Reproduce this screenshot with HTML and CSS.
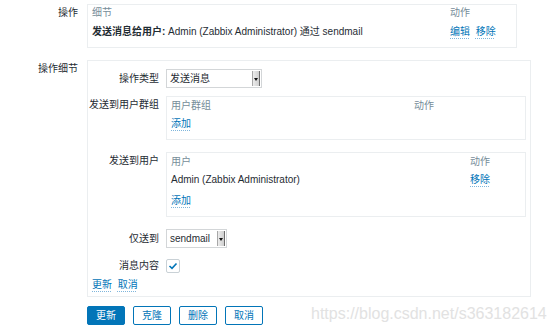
FILE: index.html
```html
<!DOCTYPE html>
<html lang="zh-CN">
<head>
  <meta charset="UTF-8" />
  <meta name="viewport" content="width=device-width, initial-scale=1.0"/>
  <title>操作</title>
  <link rel="stylesheet" href="styles.css">
</head>
<body>
  <div class="page">
    <div class="row">
      <div class="label">操作</div>
      <div class="box ops">
        <div class="ops-head">
          <span class="col-detail">细节</span>
          <span>动作</span>
        </div>
        <div class="ops-line">
          <span class="col-detail"><b>发送消息给用户:</b> Admin (Zabbix Administrator) 通过 sendmail</span>
          <span class="links"><a href="#">编辑</a> <a href="#">移除</a></span>
        </div>
      </div>
    </div>

    <div class="row row-details">
      <div class="label">操作细节</div>
      <div class="box details">
        <div class="field field-type">
          <div class="field-label">操作类型</div>
          <div class="select select-type">
            <span class="select-text">发送消息</span>
            <span class="select-arrow"></span>
          </div>
        </div>

        <div class="field field-top field-groups">
          <div class="field-label">发送到用户群组</div>
          <div class="inner">
            <div class="inner-head">
              <span class="col-group">用户群组</span>
              <span>动作</span>
            </div>
            <div class="inner-line"><a href="#">添加</a></div>
          </div>
        </div>

        <div class="field field-top field-users">
          <div class="field-label">发送到用户</div>
          <div class="inner">
            <div class="inner-head">
              <span class="col-user">用户</span>
              <span>动作</span>
            </div>
            <div class="inner-line">
              <span class="col-user">Admin (Zabbix Administrator)</span>
              <a href="#">移除</a>
            </div>
            <div class="inner-line add-line"><a href="#">添加</a></div>
          </div>
        </div>

        <div class="field field-media">
          <div class="field-label">仅送到</div>
          <div class="select select-media">
            <span class="select-text">sendmail</span>
            <span class="select-arrow"></span>
          </div>
        </div>

        <div class="field field-message">
          <div class="field-label">消息内容</div>
          <span class="checkbox">
            <svg width="10" height="8" viewBox="0 0 10 8"><path d="M1.5 4 L4 6.3 L8.5 1.5" fill="none" stroke="#0275b8" stroke-width="1.6"/></svg>
          </span>
        </div>

        <div class="form-links"><a href="#">更新</a> <a href="#">取消</a></div>
      </div>
    </div>

    <div class="buttons">
      <button class="btn btn-primary">更新</button>
      <button class="btn">克隆</button>
      <button class="btn">删除</button>
      <button class="btn">取消</button>
    </div>

    <div class="watermark">https://blog.csdn.net/s363182614</div>
  </div>
</body>
</html>
```

FILE: styles.css
```css
body {
  font-family: "Liberation Sans", "Noto Sans CJK SC", sans-serif;
  font-size: 10px;
  color: #1f2c33;
  background-color: white;
  margin: 0;
  padding: 0;
}
a {
  color: #0275b8;
  text-decoration: underline dotted #7fb6dc;
  text-underline-offset: 3px;
}
.page {
  position: relative;
  padding-top: 4px;
  height: 329px;
}
.row {
  display: flex;
  align-items: flex-start;
}
.label {
  width: 87px;
  padding-right: 9px;
  text-align: right;
  line-height: 18px;
  box-sizing: border-box;
  flex-shrink: 0;
}
.box {
  border: 1px solid #ebeef0;
  box-sizing: border-box;
}
.ops {
  width: 430px;
  height: 44px;
  padding: 0 4px;
}
.ops-head {
  display: flex;
  line-height: 16px;
  color: #768d99;
}
.ops-line {
  display: flex;
  line-height: 18px;
  margin-top: 2px;
}
.col-detail {
  width: 358px;
}
.links a {
  margin-right: 3px;
}
.row-details {
  margin-top: 12px;
}
.details {
  width: 444px;
  height: 237px;
  padding: 8px 4px 0 0;
}
.field {
  display: flex;
  align-items: center;
}
.field-top {
  align-items: flex-start;
}
.field-label {
  width: 71px;
  margin-right: 7px;
  text-align: right;
  line-height: 18px;
  flex-shrink: 0;
}
.field-groups {
  margin-top: 8px;
}
.field-users {
  margin-top: 12px;
}
.field-media {
  margin-top: 12px;
}
.field-message {
  margin-top: 9px;
}
.select {
  display: flex;
  height: 19px;
  border: 1px solid #d3d6d8;
  box-sizing: border-box;
  background-color: white;
}
.select-type {
  width: 96px;
}
.select-media {
  width: 61px;
}
.select-text {
  flex: 1;
  padding-left: 3px;
  line-height: 17px;
  white-space: nowrap;
}
.select-arrow {
  position: relative;
  width: 6px;
  margin: 1px;
  background: linear-gradient(to right, #ececec, #cfcfcf);
  border-left: 1px solid #a8a8a8;
  border-right: 1px solid #6e6e6e;
}
.select-arrow::after {
  content: "";
  position: absolute;
  left: 1px;
  top: 7px;
  border-left: 2px solid transparent;
  border-right: 2px solid transparent;
  border-top: 3px solid #111;
}
.inner {
  width: 361px;
  border: 1px solid #ebeef0;
  box-sizing: border-box;
  padding: 0 4px 6px;
}
.inner-head {
  display: flex;
  line-height: 18px;
  color: #768d99;
}
.inner-line {
  display: flex;
  line-height: 18px;
}
.add-line {
  margin-top: 3px;
}
.col-group {
  width: 243px;
}
.col-user {
  width: 299px;
}
.checkbox {
  display: flex;
  align-items: center;
  justify-content: center;
  width: 14px;
  height: 14px;
  border: 1px solid #c9d1d6;
  box-sizing: border-box;
  border-radius: 2px;
}
.form-links {
  margin-top: 1px;
  padding-left: 4px;
  line-height: 18px;
}
.form-links a {
  margin-right: 3px;
}
.buttons {
  display: flex;
  gap: 8px;
  margin-top: 9px;
  padding-left: 87px;
}
.btn {
  width: 38px;
  height: 19px;
  padding: 0;
  font-family: "Liberation Sans", "Noto Sans CJK SC", sans-serif;
  font-size: 10px;
  line-height: 17px;
  color: #0275b8;
  background-color: white;
  border: 1px solid #0275b8;
  border-radius: 2px;
  cursor: pointer;
}
.btn-primary {
  color: white;
  background-color: #0275b8;
}
.watermark {
  position: absolute;
  left: 311px;
  top: 305px;
  font-size: 16px;
  color: #e2e2e2;
}
```
